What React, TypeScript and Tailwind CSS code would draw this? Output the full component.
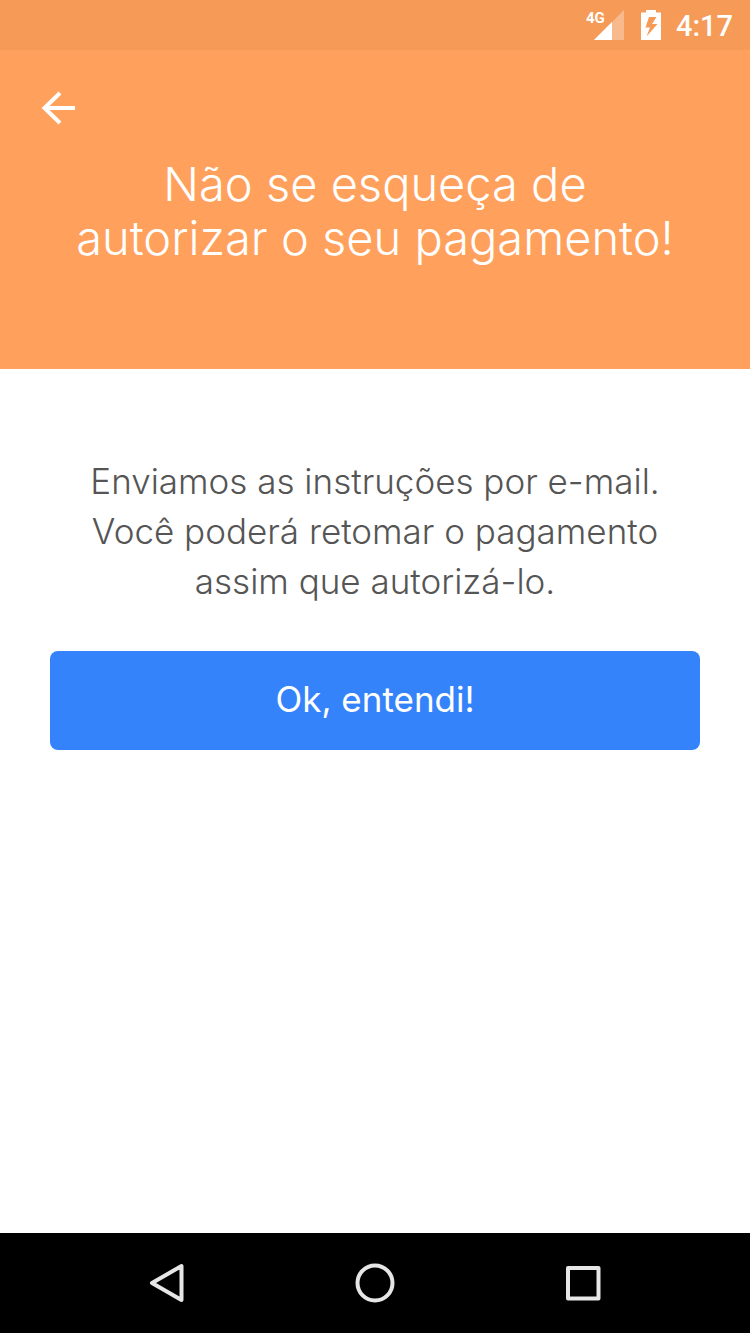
function StatusBar() {
  return (
    <div className="flex h-[50px] items-center justify-end bg-[#f59a57] pr-[17px] text-white">
      <svg className="h-[50px] w-[40px]" viewBox="0 0 40 50" role="img" aria-label="4G">
        <path d="M39 10V40H9Z" fill="#fff" fillOpacity="0.32" />
        <path d="M27 22V40H9Z" fill="#fff" />
        <text x="1" y="23" fontFamily="Roboto, sans-serif" fontSize="15" fontWeight="700" fill="#fff">
          4G
        </text>
      </svg>
      <svg className="ml-4 h-[50px] w-[20px]" viewBox="0 0 20 50" role="img" aria-label="Bateria carregando">
        <path
          fill="#fff"
          fillRule="evenodd"
          d="M5 10H15V12.500H20V40H0V12.500H5ZM8 17L4.500 27.500H9L5.500 36.500L16.500 24H11L15.500 17Z"
        />
      </svg>
      <span className="ml-[15px] pt-0.5 font-[Roboto,sans-serif] text-[29px] leading-[50px] font-medium">4:17</span>
    </div>
  );
}

function NavBar() {
  return (
    <nav
      className="flex h-[100px] items-center justify-center gap-[168px] bg-black text-[#e6e6e6]"
      aria-label="Navegação do sistema"
    >
      <button type="button" aria-label="Voltar">
        <svg className="h-10 w-10" viewBox="0 0 40 40" fill="none" stroke="currentColor" strokeWidth="4" strokeLinejoin="round">
          <path d="M34.500 3V37L5 20Z" />
        </svg>
      </button>
      <button type="button" aria-label="Início">
        <svg className="h-10 w-10" viewBox="0 0 40 40" fill="none" stroke="currentColor" strokeWidth="4">
          <circle cx="20" cy="20" r="17.500" />
        </svg>
      </button>
      <button type="button" aria-label="Recentes">
        <svg className="h-10 w-10" viewBox="0 0 40 40" fill="none" stroke="currentColor" strokeWidth="4" strokeLinejoin="round">
          <path d="M5 5H35.500V35.500H5Z" />
        </svg>
      </button>
    </nav>
  );
}

export default function App() {
  return (
    <div className="flex min-h-screen flex-col bg-white font-[Inter,sans-serif]">
      <StatusBar />
      <header className="bg-[#ffa15c] px-10 pt-10 pb-[104px] text-white">
        <button type="button" aria-label="Voltar" className="block">
          <svg className="h-9 w-9" viewBox="0 0 36 36" fill="none" stroke="currentColor" strokeWidth="4">
            <path d="M35 18H4M20 3L4.500 18L20 33" />
          </svg>
        </button>
        <h1 className="mt-[31px] text-center text-[47px] leading-[54px] font-light">
          Não se esqueça de
          <br />
          autorizar o seu pagamento!
        </h1>
      </header>
      <main className="flex-1 px-[50px] pt-[87px]">
        <p className="text-center text-[35px] leading-[50px] font-light text-[#555555]">
          Enviamos as instruções por e-mail.
          <br />
          Você poderá retomar o pagamento
          <br />
          assim que autorizá-lo.
        </p>
        <button type="button" className="mt-[45px] h-[99px] w-full rounded-lg bg-[#3483fa] pb-0.5 text-[35px] text-white">
          Ok, entendi!
        </button>
      </main>
      <NavBar />
    </div>
  );
}
